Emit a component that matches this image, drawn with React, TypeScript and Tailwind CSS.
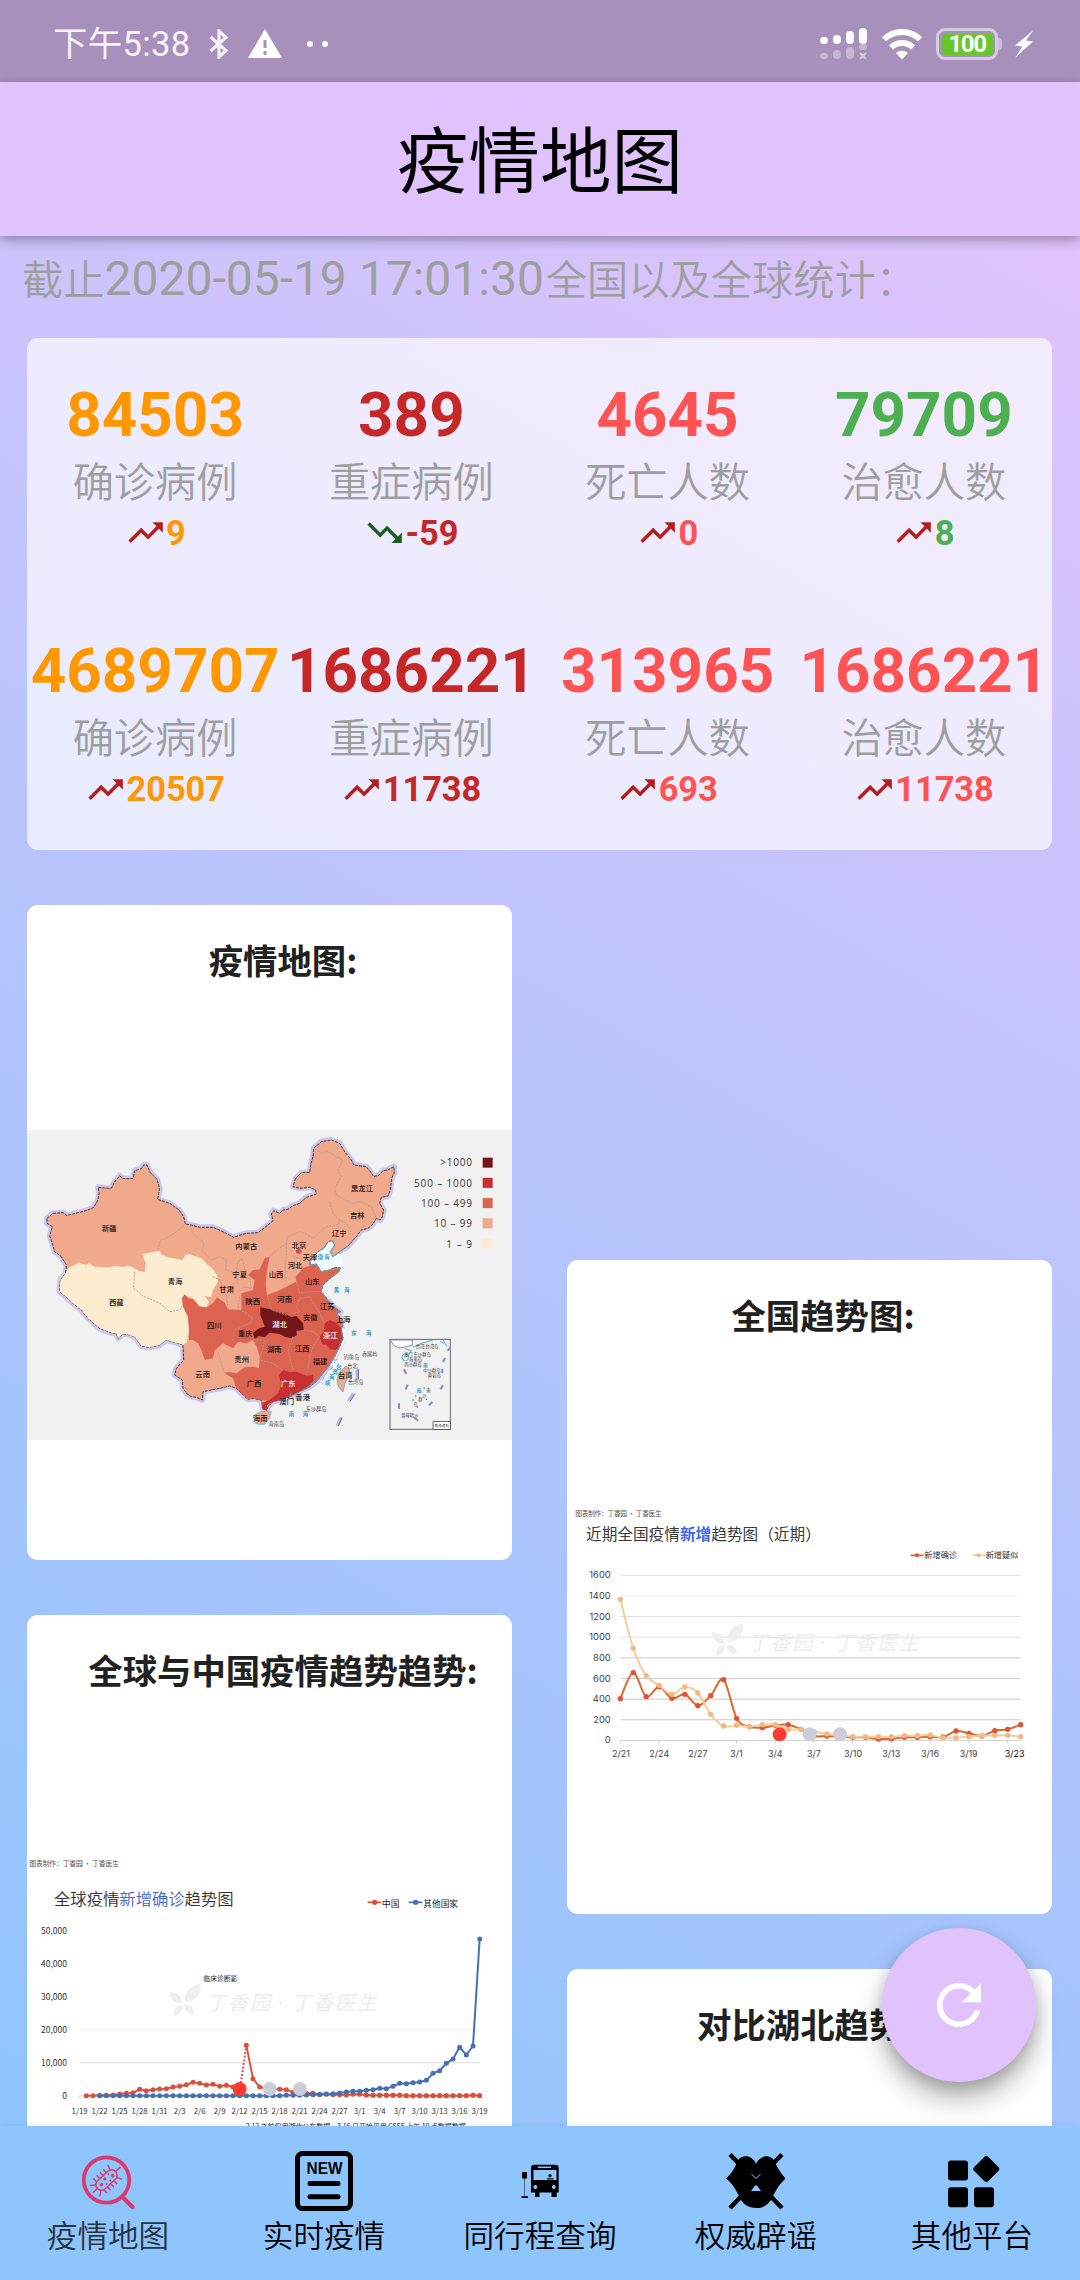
import React from "react";

const POINTS_OUTLINE =
  "82,325 100,310 130,308 142,316 155,313 180,307 205,300 222,292 235,270 238,250 236,232 255,234 275,235 284,217 300,197 308,205 325,206 340,205 345,182 365,176 372,165 382,165 392,188 412,208 420,235 414,268 450,280 478,300 492,320 497,342 515,345 540,352 580,352 610,365 642,382 665,374 680,370 715,368 745,345 760,332 755,312 762,302 780,310 790,300 805,298 820,287 840,280 860,262 890,252 888,240 870,232 840,235 820,230 828,205 845,188 870,187 874,160 880,140 882,115 905,95 935,90 960,100 975,125 995,150 1003,165 1040,170 1050,182 1062,200 1078,195 1090,182 1104,180 1123,170 1124,188 1116,205 1112,240 1105,258 1085,262 1080,280 1092,300 1088,320 1082,330 1070,325 1060,342 1045,355 1025,360 1010,380 985,408 960,425 940,440 932,425 945,405 938,392 925,395 912,415 895,425 885,435 870,450 872,465 890,462 905,485 930,480 945,472 962,474 958,485 930,505 910,525 905,545 925,570 940,590 962,605 950,612 970,630 970,645 965,660 970,685 960,710 945,740 930,765 910,790 890,815 870,830 840,845 815,858 790,868 760,875 745,890 742,900 730,895 725,870 700,865 685,868 665,850 650,835 630,828 600,835 575,840 550,845 548,870 530,862 515,860 500,850 490,835 488,810 465,795 470,775 492,750 490,705 470,698 440,690 420,705 390,712 365,708 345,680 320,672 310,672 295,685 290,670 280,670 240,655 205,625 185,600 160,580 145,565 120,545 122,510 138,490 140,465 125,440 105,425 98,400 90,378 98,350 82,340";

const POINTS_WEST =
  "145,475 178,458 200,465 208,460 225,470 250,472 270,472 288,467 310,470 330,468 345,475 358,483 375,486 378,460 368,432 405,425 420,423 425,432 445,442 490,450 497,435 510,433 530,440 545,445 560,460 580,478 592,495 595,515 580,540 575,560 555,558 568,575 560,592 540,588 520,565 495,555 487,565 490,590 505,620 508,660 502,695 492,705 470,698 440,690 420,705 390,712 365,708 345,680 320,672 310,672 295,685 290,670 280,670 240,655 205,625 185,600 160,580 145,565 120,545 122,510 138,490";

const POINTS_MIDDLE =
  "487,565 495,553 505,565 520,568 540,590 562,592 580,580 592,562 615,578 625,598 665,600 665,550 700,540 705,510 685,495 700,480 720,478 735,445 750,440 742,480 738,520 742,555 775,543 800,530 830,515 828,500 850,475 872,466 890,465 905,485 930,480 945,472 962,474 958,485 930,505 910,525 905,545 925,570 940,590 962,605 950,612 970,630 970,645 965,660 970,685 960,710 945,740 930,765 910,790 890,815 870,830 840,845 815,858 790,868 760,875 725,870 700,865 685,868 665,850 650,835 640,805 615,790 625,785 650,790 675,772 700,770 718,775 720,740 712,712 700,690 680,700 655,695 640,715 610,700 600,708 585,722 580,745 555,750 545,720 535,700 520,690 508,690 508,660 505,620 490,590";

const BORDERS = [
  "345,485 342,535 370,558 420,580 450,605 480,600 490,585",
  "415,420 422,390 440,385 470,365 497,342",
  "512,345 518,370 550,395 552,410 545,420 560,435 575,450 600,440 620,450 618,480 640,485",
  "640,520 655,520 650,490 655,455 668,445 675,480 690,500 695,535 670,530 660,545",
  "580,500 600,510 620,555 625,598 655,600 660,560",
  "750,440 765,425 775,418 800,400 805,380 840,365 860,372 880,385 890,375 920,350 955,345 960,330",
  "800,400 800,440 795,470 800,515",
  "882,115 905,130 925,125 950,140 970,150 955,180 965,200 945,235 950,255 975,270 1000,280 1020,275 1055,290 1070,325",
  "930,275 940,310 960,330 980,340 1000,375",
  "830,515 840,550 870,545 905,545",
  "742,555 755,600 800,615 840,605 830,590 840,565 870,560 900,610 915,640",
  "852,660 880,665 900,680 880,710 870,740 865,780",
  "820,680 805,720 820,780",
  "700,690 735,690 720,750 760,760 790,782",
  "640,690 645,660 690,640 700,625 665,600",
  "595,725 605,760 615,790",
  "820,440 850,445 870,450",
];

type Place = [string, number, number, string?];
const PLACES: Place[] = [
  ["新疆", 268, 356], ["内蒙古", 680, 410], ["宁夏", 660, 493], ["甘肃", 621, 538], ["青海", 466, 513],
  ["西藏", 290, 577], ["陕西", 699, 575], ["四川", 584, 647], ["重庆", 677, 671], ["贵州", 666, 749],
  ["云南", 549, 794], ["广西", 703, 820], ["海南", 722, 926], ["黑龙江", 1027, 236], ["吉林", 1013, 315],
  ["辽宁", 959, 371], ["北京", 838, 407], ["天津", 871, 442], ["河北", 826, 466], ["山西", 769, 493],
  ["山东", 878, 513], ["河南", 795, 569], ["江苏", 922, 589], ["安徽", 872, 623], ["上海", 971, 629],
  ["浙江", 932, 675, "#fff"], ["湖北", 780, 642, "#fff"], ["湖南", 764, 717], ["江西", 847, 716],
  ["福建", 901, 754], ["台湾", 977, 797], ["广东", 806, 819, "#fff"], ["香港", 849, 863], ["澳门", 801, 875],
];
const SEAS: [string, number, number][] = [
  ["渤", 902, 442], ["海", 922, 442], ["黄", 950, 541], ["海", 982, 541], ["东", 1003, 668], ["海", 1047, 668],
  ["南", 815, 912], ["海", 857, 912], ["台", 958, 772], ["湾", 946, 786], ["海", 936, 801], ["峡", 924, 818],
];
const ISLES: [string, number, number][] = [
  ["钓鱼岛", 995, 742], ["赤尾屿", 1050, 733], ["台北", 998, 769], ["台湾岛", 1008, 817], ["东沙群岛", 889, 896], ["海南岛", 770, 942],
];
const SCALE: [string, string][] = [
  [">1000", "#74151b"], ["500 – 1000", "#c72f32"], ["100 – 499", "#dd6351"], ["10 – 99", "#f1a98b"], ["1 – 9", "#fbecd0"],
];

function ChinaMap() {
  return (
    <svg viewBox="22 60 1455 930" className="block h-[310px] w-full bg-[#f1f1f1] font-['Noto_Sans_CJK_SC',sans-serif]">
      <polygon points={POINTS_OUTLINE} fill="none" stroke="#c9c8ea" strokeWidth="18" strokeLinejoin="round" />
      <path d="M925 570L905 545L912 525L960 485L1000 480L985 430L940 440L932 425L945 405L938 392L912 415L870 450V466L905 487L958 478M970 630L972 685L930 765" fill="none" stroke="#f1f1f1" strokeWidth="16" />
      <path d="M870 450L895 425L925 395L945 400L935 440L965 432L972 470L905 487Z" fill="#f3fafd" />
      <polygon points={POINTS_OUTLINE} fill="#f1a98b" stroke="#4a3038" strokeWidth="3" strokeDasharray="9 3" />
      <polygon points={POINTS_WEST} fill="#fbecd0" />
      <polygon points={POINTS_MIDDLE} fill="#dd6351" />
      <polygon points="722,592 750,597 775,605 800,612 815,622 830,618 850,640 852,660 830,662 832,675 815,685 795,680 780,672 750,668 735,682 718,678 705,687 700,668 718,655 735,650 728,630 722,615" fill="#74151b" />
      <polygon points="900,680 912,665 915,640 930,630 950,638 965,655 970,685 960,710 948,720 932,718 920,705 908,703" fill="#c72f32" />
      <polygon points="750,870 775,850 785,825 778,795 790,780 810,787 830,785 860,797 880,795 882,815 860,835 840,845 810,860 760,875 742,885 742,902 728,898 726,880" fill="#c72f32" />
      <polygon points="828,420 838,416 848,424 840,432 830,430" fill="#dd4a44" />
      <g fill="none" stroke="#b49a90" strokeWidth="2.4" strokeDasharray="7 3">
        {BORDERS.map((b) => (
          <polyline key={b} points={b} />
        ))}
      </g>
      <g fill="none" stroke="#52aed0" strokeWidth="2.4" strokeLinejoin="round">
        <path d="M985 408L960 425L940 440L932 425L945 405L938 392L925 395L912 415L895 425L870 450L872 465L890 462L905 485L930 480L962 474L958 485L910 525L905 545L925 570L962 605L950 612L970 630L965 660L970 685L945 740L930 765L890 815L840 845L815 858" />
        <path d="M700 918L722 905L755 905L748 925L735 943L710 942Z" fill="#f1a98b" />
        <path d="M980 768L990 778L985 800L976 820L970 846L956 830L952 808L960 785Z" fill="#f1a98b" />
        <path d="M726 878l5 6M815 845l-4 12 8 4M944 752l8-4M940 770l-8 10M914 800l-6 12M884 812l-8 8M904 816l4 6M956 430l14-2M968 650l8 4" />
      </g>
      <g stroke="#b9b8e0" strokeWidth="9">
        <path d="M1012 778V808M1001 850L986 873M964 922L953 947" />
        <path d="M1006 851L991 874M967 923L956 948M1016 778V808" stroke="#57506c" strokeWidth="2.5" />
      </g>
      <g textAnchor="middle" fontSize="22" fontWeight="500">
        {PLACES.map(([t, x, y, c]) => (
          <text key={t} x={x} y={y + 8} fill={c ?? "#1c1012"}>{t}</text>
        ))}
      </g>
      <g textAnchor="middle" fontSize="16" fill="#2b9fd0" fontWeight="700">
        {SEAS.map(([t, x, y]) => (
          <text key={t + x} x={x} y={y + 6}>{t}</text>
        ))}
      </g>
      <g textAnchor="middle" fontSize="15.5" fill="#444">
        {ISLES.map(([t, x, y]) => (
          <text key={t} x={x} y={y + 6}>{t}</text>
        ))}
      </g>
      <rect x="1111" y="688" width="181" height="270" fill="none" stroke="#666" strokeWidth="3" />
      <path d="M1112 690H1178V706L1150 712L1138 714L1122 706Z" fill="#fff" stroke="#8d86b8" strokeWidth="3" />
      <g fill="none" stroke="#2b9fd0" strokeWidth="2.5">
        <circle cx="1157" cy="742" r="10" />
        <path d="M1155 716L1175 722L1168 734M1180 712L1205 700L1240 690M1270 690L1282 710M1272 700L1262 695" />
      </g>
      <g stroke="#8f88c0" strokeWidth="6">
        <path d="M1152 778l8 14M1164 824l-6 14M1138 880v16M1184 924l12 8M1228 886l10-10M1262 838l8-12M1268 776v14M1270 756l6-12M1284 722l7-9" />
      </g>
      <g fontSize="13" fill="#333" textAnchor="middle">
        <text x="1222" y="713">台湾 台湾岛</text>
        <text x="1193" y="737">澳门 东沙群岛</text>
        <text x="1187" y="753">海南岛</text>
        <text x="1180" y="767">西沙群岛</text>
        <text x="1237" y="786">中沙群岛</text>
        <text x="1244" y="801">黄岩岛</text>
        <text x="1170" y="921">曾母暗沙</text>
        <text x="1226" y="845">南</text>
        <text x="1214" y="860">沙</text>
        <text x="1202" y="874">群</text>
        <text x="1188" y="887">岛</text>
      </g>
      <g fontSize="14" fill="#2b9fd0" fontWeight="700">
        <text x="1210" y="772">南</text>
        <text x="1190" y="846">海</text>
      </g>
      <path d="M1186 858h4M1202 846h4M1212 834h4M1218 868h4M1178 870h4M1192 892h3" stroke="#2b9fd0" strokeWidth="4" />
      <rect x="1240" y="935" width="52" height="23" fill="#fafafa" stroke="#333" strokeWidth="2" />
      <text x="1266" y="951" fontSize="11" fill="#444" textAnchor="middle">南海诸岛</text>
      {SCALE.map(([label, color], i) => (
        <g key={label}>
          <text x="1357" y={168.500 + i * 61} textAnchor="end" fontSize="30" fill="#3b3338" className="font-['Open_Sans','Liberation_Sans',sans-serif]" textLength={[95, 174, 153, 114, 77][i]} lengthAdjust="spacing">{label}</text>
          <rect x="1389" y={143 + i * 60.6} width="30" height="30" fill={color} />
        </g>
      ))}
    </svg>
  );
}

type Pt = [number, number];

function smooth(pts: Pt[]) {
  let d = `M${pts[0][0]} ${pts[0][1]}`;
  for (let i = 0; i < pts.length - 1; i++) {
    const p0 = pts[i - 1] ?? pts[i];
    const p1 = pts[i];
    const p2 = pts[i + 1];
    const p3 = pts[i + 2] ?? p2;
    d += `C${p1[0] + (p2[0] - p0[0]) / 6} ${p1[1] + (p2[1] - p0[1]) / 6} ${p2[0] - (p3[0] - p1[0]) / 6} ${p2[1] - (p3[1] - p1[1]) / 6} ${p2[0]} ${p2[1]}`;
  }
  return d;
}

const straight = (pts: Pt[]) => "M" + pts.map((p) => p.join(" ")).join("L");

function Dots({ pts, r, fill }: { pts: Pt[]; r: number; fill: string }) {
  return (
    <g fill={fill}>
      {pts.map(([x, y]) => (
        <circle key={x} cx={x} cy={y} r={r} />
      ))}
    </g>
  );
}

function Pager({ y }: { y: number }) {
  return (
    <g fill="#cbced6">
      <circle cx="660" cy={y} r="21" fill="#ff3b30" />
      <circle cx="750" cy={y} r="21" />
      <circle cx="841" cy={y} r="21" />
    </g>
  );
}

function Watermark({ x, y }: { x: number; y: number }) {
  return (
    <g transform={`translate(${x} ${y})`} fill="#efefef">
      <path d="M94 -50C60 -42 42 -20 48 6C76 8 96 -14 94 -50ZM0 -24C2 0 18 14 38 10C38 -12 24 -24 0 -24ZM14 48C12 26 22 14 38 14C42 30 34 42 14 48ZM76 42C74 24 64 14 46 14C44 30 56 42 76 42Z" />
      <g fontSize="60" fontStyle="italic" fontWeight="350" fill="#ececec">
        <text x="110" y="29" textLength="192">丁香园</text>
        <circle cx="334" cy="7" r="4" />
        <text x="366" y="29" textLength="256">丁香医生</text>
      </g>
    </g>
  );
}

const RED_Y = [626, 548, 620, 590, 625, 613, 647, 617, 569, 685, 710, 713, 706, 704, 718, 738, 738, 740, 742, 742, 747, 746, 742, 742, 740, 741, 723, 730, 738, 722, 718, 704];
const ORANGE_Y = [328, 475, 557, 586, 613, 591, 609, 673, 708, 706, 710, 704, 704, 718, 718, 725, 732, 736, 740, 740, 740, 740, 737, 737, 735, 743, 743, 740, 737, 736, 736, 740];

function NationalTrend() {
  const at = (y: number, i: number): Pt => [182 + i * 38.74, y];
  const red = RED_Y.map(at);
  const orange = ORANGE_Y.map(at);
  const days: [string, number][] = [["2/21", 184], ["2/24", 299], ["2/27", 415], ["3/1", 530], ["3/4", 647], ["3/7", 763], ["3/10", 880], ["3/13", 995], ["3/16", 1111], ["3/19", 1227]];
  const grid = ["#dedede", "#f2f2f2", "#dedede", "#e2e2e2", "#c9c9c9", "#cccccc", "#c9c9c9", "#c9c9c9", "#cfcfcf"];
  return (
    <svg viewBox="22 36 1455 825" className="block h-[275px] w-full bg-[#fefefe] font-['Noto_Sans_CJK_SC',sans-serif]">
      <text x="47" y="77" fontSize="20" fill="#555" textLength="259">图表制作：丁香园 · 丁香医生</text>
      <text x="79" y="149" fontSize="47" fill="#3a3a3a">
        近期全国疫情<tspan fill="#4169e8" fontWeight="700">新增</tspan>趋势图（近期）
      </text>
      <g strokeWidth="5">
        <path d="M1053 196h39" stroke="#d9642e" />
        <path d="M1239 196h39" stroke="#f5cda0" />
      </g>
      <circle cx="1072" cy="196" r="6" fill="#e2503a" />
      <circle cx="1257" cy="196" r="6" fill="#efb983" />
      <text x="1094" y="204" fontSize="24.5" fill="#333">新增确诊</text>
      <text x="1278" y="204" fontSize="24.5" fill="#333">新增疑似</text>
      {grid.map((c, i) => (
        <g key={i}>
          <path d={`M183 ${256 + i * 61.9}H1383`} stroke={c} strokeWidth="3" />
          <text x="153" y={265 + i * 61.9} fontSize="28" fill="#444" textAnchor="end" className="font-['Inter',sans-serif]">{1600 - i * 200}</text>
        </g>
      ))}
      <g stroke="#c9c9c9" strokeWidth="3">
        {red.filter((_, i) => i % 3 === 0).map(([x]) => (
          <path key={x} d={`M${x} 751v9`} />
        ))}
      </g>
      <Watermark x={456} y={450} />
      <g fontSize="27" fill="#444" textAnchor="middle" className="font-['Inter',sans-serif]">
        {days.map(([d, x]) => (
          <text key={d} x={x} y="800">{d}</text>
        ))}
        <text x="1365" y="802" fill="#111">3/23</text>
      </g>
      <path d={smooth(red)} fill="none" stroke="#d96a28" strokeWidth="6" />
      <Dots pts={red} r={8} fill="#e2503a" />
      <path d={smooth(orange)} fill="none" stroke="#f5cda0" strokeWidth="6" />
      <Dots pts={orange} r={8} fill="#efb983" />
      <Pager y={733} />
    </svg>
  );
}

const CN_Y = [767, 767, 766, 766, 765, 762, 760, 758, 748, 752, 749, 747, 746, 741, 739, 734, 727, 730, 735, 733, 739, 736, 741, 745, 616, 716, 741, 746, 747, 748, 749, 757, 759, 760, 760, 764, 763, 764, 764, 765, 763, 763, 765, 766, 766, 766, 766, 766, 767, 767, 767, 767, 767, 767, 767, 767, 767, 767, 766, 767];
const WORLD_Y = [765, 764, 763, 762, 761, 759, 756, 754, 754, 751, 749, 745, 746, 739, 730, 731, 728, 726, 721, 700, 692, 670, 657, 622, 645, 618, 297];

function GlobalTrend() {
  const cn = CN_Y.map((y, i): Pt => [200 + i * 20, y]);
  const world: Pt[] = [
    ...Array.from({ length: 31 }, (_, i): Pt => [240 + i * 20, i < 28 ? 767 : 766]),
    ...WORLD_Y.map((y, i): Pt => [860 + i * 20, y]),
  ];
  const days = ["1/19", "1/22", "1/25", "1/28", "1/31", "2/3", "2/6", "2/9", "2/12", "2/15", "2/18", "2/21", "2/24", "2/27", "3/1", "3/4", "3/7", "3/10", "3/13", "3/16", "3/19"];
  return (
    <svg viewBox="22 51 1455 825" className="block h-[275px] w-full bg-[#fefefe] font-['Noto_Sans_CJK_SC',sans-serif]">
      <text x="29" y="79" fontSize="20.5" fill="#555" textLength="269">图表制作：丁香园 · 丁香医生</text>
      <text x="103" y="194" fontSize="49" fontWeight="350" fill="#333">
        全球疫情<tspan fill="#4169c8">新增确诊</tspan>趋势图
      </text>
      <g strokeWidth="5">
        <path d="M1044 187h41" stroke="#d8513a" />
        <path d="M1167 187h41" stroke="#476fb5" />
      </g>
      <circle cx="1065" cy="187" r="8" fill="#d8513a" />
      <circle cx="1188" cy="187" r="8" fill="#476fb5" />
      <text x="1087" y="201" fontSize="26" fill="#222">中国</text>
      <text x="1211" y="201" fontSize="26" fill="#222">其他国家</text>
      <text x="551" y="423" fontSize="20.5" fill="#222">临床诊断影</text>
      <path d="M180 569H1380" stroke="#f0f0f0" strokeWidth="3" />
      <path d="M180 668H1380" stroke="#dcdcdc" strokeWidth="3" />
      <path d="M180 776V767H1380" stroke="#dcdcdc" strokeWidth="3" fill="none" />
      <g fontSize="25.5" fill="#333" textAnchor="end">
        {["50,000", "40,000", "30,000", "20,000", "10,000", "0"].map((v, i) => (
          <text key={v} x="142" y={282 + i * 99.2}>{v}</text>
        ))}
      </g>
      <g fontSize="23.5" fill="#333" textAnchor="middle">
        {days.map((d, i) => (
          <text key={d} x={180 + i * 60} y="822">{d}</text>
        ))}
      </g>
      <Watermark x={449} y={480} />
      <g fill="none" stroke="#d8513a" strokeWidth="6">
        <path d={straight(cn.slice(0, 24))} />
        <path d="M662 740L680 616" strokeDasharray="6 5" />
        <path d={straight(cn.slice(24))} />
      </g>
      <Dots pts={cn} r={7.5} fill="#d8513a" />
      <path d={straight(world)} fill="none" stroke="#476fb5" strokeWidth="6" />
      <Dots pts={world} r={7.5} fill="#476fb5" />
      <Dots pts={cn.slice(42)} r={7.5} fill="#d8513a" />
      <Pager y={747} />
      <text x="678" y="866" fontSize="21" fill="#222" textLength="660">2.12 之前仅用湖北公布数据，3.16 日开始采用 CSSE 上午 10 点数据数据</text>
    </svg>
  );
}

function Card({ title, children }: { title: string; children?: React.ReactNode }) {
  return (
    <section className="flex h-[654.5px] w-full shrink-0 flex-col overflow-hidden rounded-[11px] bg-white">
      <h2 className="h-[105px] pt-[29px] pl-[27px] text-center font-['Noto_Sans_CJK_SC',sans-serif] text-[34.4px] leading-[50px] font-bold whitespace-nowrap text-[#212121]">{title}</h2>
      <div className="flex flex-1 items-center">{children}</div>
    </section>
  );
}

interface Stat {
  value: string;
  label: string;
  delta: string;
  color: string;
  down?: boolean;
}
const STATS: Stat[] = [
  { value: "84503", label: "确诊病例", delta: "9", color: "text-[#ff9800]" },
  { value: "389", label: "重症病例", delta: "-59", color: "text-[#c62828]", down: true },
  { value: "4645", label: "死亡人数", delta: "0", color: "text-[#ff5252]" },
  { value: "79709", label: "治愈人数", delta: "8", color: "text-[#4caf50]" },
  { value: "4689707", label: "确诊病例", delta: "20507", color: "text-[#ff9800]" },
  { value: "1686221", label: "重症病例", delta: "11738", color: "text-[#c62828]" },
  { value: "313965", label: "死亡人数", delta: "693", color: "text-[#ff5252]" },
  { value: "1686221", label: "治愈人数", delta: "11738", color: "text-[#ff5252]" },
];

function StatCell({ stat }: { stat: Stat }) {
  return (
    <div className="flex h-[256.25px] flex-col items-center pt-[41px] font-['Roboto','Noto_Sans_CJK_SC',sans-serif]">
      <div className={`text-[61.9px] leading-[73px] font-bold ${stat.color}`}>{stat.value}</div>
      <div className="pt-[2px] text-[41.25px] leading-[59px] font-[350] text-[#9e9e9e]">{stat.label}</div>
      <div className="flex h-[41px] items-center">
        {stat.down ? (
          <svg viewBox="0 0 24 24" className="size-[41.25px]" fill="#1b5e20"><path d="M16 18l2.29-2.29-4.88-4.88-4 4L2 7.41 3.41 6l6 6 4-4 6.3 6.29L22 12v6z" /></svg>
        ) : (
          <svg viewBox="0 0 24 24" className="size-[41.25px]" fill="#b71c1c"><path d="M16 6l2.29 2.29-4.88 4.88-4-4L2 16.59 3.41 18l6-6 4 4 6.3-6.29L22 12V6z" /></svg>
        )}
        <span className={`text-[34.4px] leading-[41px] font-bold ${stat.color}`}>{stat.delta}</span>
      </div>
    </div>
  );
}

function StatusBar() {
  return (
    <div className="flex h-[82px] items-center bg-[#a790bb] pt-[6px] pr-[46px] pl-[53px] font-['Roboto','Noto_Sans_CJK_SC',sans-serif] text-white">
      <span className="text-[34.4px] leading-[40px] tracking-[0.4px] text-white/90">下午5:38</span>
      <svg viewBox="0 0 20 30" className="ml-[18px] h-[30px] w-[20px]" fill="none" stroke="#f4f0f7" strokeWidth="3.2"><path d="M1.5 8L17 21.5L10 28V2L17 8.500L1.500 22" /></svg>
      <svg viewBox="0 0 34 30" className="ml-[19px] h-[30px] w-[34px]"><path d="M17 0L34 29H0Z" fill="#fff" /><path d="M17 11v8M17 22v4" stroke="#a790bb" strokeWidth="3" /></svg>
      <span className="ml-[25px] size-[6px] rounded-full bg-white" />
      <span className="ml-[9px] size-[6px] rounded-full bg-white" />
      <svg viewBox="0 0 48 32" className="ml-auto h-[32px] w-[48px]">
        <g fill="#fff">
          <rect x="0" y="9" width="8" height="7" rx="3.500" /><rect x="13" y="7" width="8" height="9" rx="4" /><rect x="26" y="3" width="8" height="13" rx="4" /><rect x="39" y="0" width="8" height="16" rx="4" />
        </g>
        <g fill="#fff" opacity=".35">
          <rect x="0" y="25" width="8" height="6" rx="3" /><rect x="13" y="22" width="8" height="9" rx="4" /><rect x="26" y="19" width="8" height="12" rx="4" /><rect x="39" y="16" width="8" height="6" rx="3" />
        </g>
        <path d="M40 25l6 6M46 25l-6 6" stroke="#fff" strokeWidth="2" opacity=".5" />
      </svg>
      <svg viewBox="0 0 40 32" className="ml-[14px] h-[32px] w-[40px]" fill="none" stroke="#fff" strokeWidth="6">
        <path d="M2 11.500A25.500 25.500 0 0 1 38 11.500" /><path d="M9 19.500A16 16 0 0 1 31 19.500" />
        <path d="M20 31.500L14 25A9 9 0 0 1 26 25Z" fill="#fff" stroke="none" />
      </svg>
      <div className="ml-[14px] flex h-[32px] w-[62px] items-center justify-center rounded-[9px] border-[3px] border-[#d8cce0] p-[2.500px]">
        <div className="flex h-full w-full items-center justify-center rounded-[4px] bg-[#66c62c] text-[24px] leading-none font-bold tracking-[-1.500px]">100</div>
      </div>
      <div className="h-[12px] w-[4px] rounded-r-[4px] bg-[#cdbfd8]" />
      <svg viewBox="0 0 20 28" className="ml-[12px] h-[28px] w-[20px]" fill="#fff"><path d="M19.500 0L1 15.500L8.500 16.500L1 28L19 11.500L12 10.500Z" /></svg>
    </div>
  );
}

function VirusIcon() {
  return (
    <svg viewBox="0 0 60 60" className="size-[60px]" fill="none" stroke="#dc3a6e" strokeLinecap="round">
      <circle cx="28.500" cy="29" r="22.700" strokeWidth="3.8" />
      <path d="M44.500 46L54.500 56" strokeWidth="4.2" />
      <g transform="rotate(-43 28.500 29)" strokeWidth="1.5">
        <rect x="16" y="23.500" width="25" height="11" rx="5.500" />
        <path d="M20 23v-3.500M24.500 23v-3.500M29 23v-3.500M33.500 23v-3.500M38 24l1.500-4.500M20 35v3.500M24.500 35v3.500M29 35v3.500M33.500 35v3.500M38 34.500l2 4M42 29h5M10.500 29h5M17 25l-4-3M17 33l-4 3" />
        <g fill="#dc3a6e" stroke="none"><circle cx="21.500" cy="29" r="1.800" /><circle cx="28" cy="27" r="1.600" /><circle cx="36" cy="30" r="1.800" /><circle cx="31" cy="32" r="1" /><circle cx="26" cy="32" r=".9" /><circle cx="34" cy="26" r=".9" /></g>
      </g>
    </svg>
  );
}

function NewsIcon() {
  return (
    <svg viewBox="0 0 60 60" className="size-[60px]" fill="none" stroke="#000" strokeWidth="5">
      <rect x="3.500" y="2.500" width="53" height="55" rx="5" />
      <path d="M16 32.500H44M16 45.700H44" strokeLinecap="round" />
      <text x="30.500" y="23.200" textAnchor="middle" stroke="none" fill="#000" textLength="36" lengthAdjust="spacingAndGlyphs" className="font-['Liberation_Sans',sans-serif] text-[16px] font-bold">NEW</text>
    </svg>
  );
}

function BusIcon() {
  return (
    <svg viewBox="0 0 60 60" className="size-[60px]">
      <path d="M12 21h5v6.500h-2V45.300h3V47h-6.500v-1.700h3V27.500H12Z" />
      <path d="M24 13.700H45.500a3.200 3.200 0 0 1 3.200 3.200V41.500h-2V46H41.500V41.500H29.500V46H25V41.500H21V16.700a3 3 0 0 1 3-3Z" />
      <path d="M28 16.300h13" stroke="#8fc5fd" strokeWidth="1.500" />
      <path d="M23.500 19h23v10H23.500Z" fill="#8fc5fd" />
      <circle cx="40" cy="24.700" r="1.600" />
      <path d="M37 27.800h6.500" stroke="#000" strokeWidth="1.200" />
      <circle cx="25.300" cy="36" r="2" fill="#8fc5fd" /><circle cx="43.800" cy="36" r="2" fill="#8fc5fd" />
    </svg>
  );
}

function RumorIcon() {
  return (
    <svg viewBox="0 0 60 60" className="size-[60px]">
      <path d="M4 3.500L56 57M56 3.500L4 57" stroke="#000" strokeWidth="4.500" />
      <path d="M30 13C26 3 14 3 10.500 12C9 17 6 22 0 27.500C6 32 9 37 13 45C16 53 22 57 30.500 57C39 57 44 52 47 45C51 37 54 33 59.500 27.500C55 22 51 17 49.500 12C46 3 34 3 30 13Z" />
      <path d="M25.500 23L30 27.500L34.500 23" fill="none" stroke="#8fc5fd" strokeWidth="1" />
      <path d="M25 40L29 34.500H31L35 40Z" fill="#8fc5fd" />
    </svg>
  );
}

function AppsIcon() {
  return (
    <svg viewBox="0 0 60 60" className="size-[60px]">
      <rect x="6" y="9.500" width="20" height="20" rx="3" /><rect x="6" y="36.300" width="20" height="20" rx="3" /><rect x="32" y="36.300" width="20" height="20" rx="3" />
      <rect x="34.300" y="8" width="20" height="20" rx="3" transform="rotate(45 44.300 18)" />
    </svg>
  );
}

const TABS = [
  { label: "疫情地图", Icon: VirusIcon, tone: "text-[#24333f]" },
  { label: "实时疫情", Icon: NewsIcon, tone: "text-black" },
  { label: "同行程查询", Icon: BusIcon, tone: "text-black" },
  { label: "权威辟谣", Icon: RumorIcon, tone: "text-black" },
  { label: "其他平台", Icon: AppsIcon, tone: "text-black" },
];

export default function App() {
  return (
    <div className="relative flex h-[2280px] w-[1080px] flex-col overflow-hidden font-['Roboto','Noto_Sans_CJK_SC',sans-serif]">
      <StatusBar />
      <header className="z-10 flex h-[154px] shrink-0 items-start justify-center bg-[#e0c3fc] pt-[24px] shadow-[0_4px_11px_rgba(0,0,0,0.32)]">
        <h1 className="font-['Noto_Sans_CJK_SC',sans-serif] text-[71.5px] leading-[100px] text-black">疫情地图</h1>
      </header>
      <main className="flex h-[1890px] shrink-0 flex-col overflow-hidden bg-[linear-gradient(209.700deg,#e0c3fc,#8ec5fc)] pr-[28px] pl-[27px]">
        <p className="-ml-[5px] flex h-[101.500px] shrink-0 items-start pt-[15px] text-[41.250px] leading-[60px] font-[350] whitespace-nowrap text-[#9e9e9e]">
          截止<span className="-mt-[2px] text-[48px] leading-[60px] font-normal">2020-05-19 17:01:30</span><span className="pl-[2px]">全国以及全球统计：</span>
        </p>
        <div className="grid shrink-0 grid-cols-4 rounded-[11px] bg-white/[0.67]">
          {STATS.map((s, i) => (
            <StatCell key={i} stat={s} />
          ))}
        </div>
        <div className="flex items-start gap-[55px] pt-[55px]">
          <div className="flex w-[485px] flex-col gap-[55px]">
            <Card title="疫情地图:"><ChinaMap /></Card>
            <Card title="全球与中国疫情趋势趋势:"><GlobalTrend /></Card>
          </div>
          <div className="flex w-[485px] flex-col gap-[55px] pt-[354.500px]">
            <Card title="全国趋势图:"><NationalTrend /></Card>
            <Card title="对比湖北趋势图:" />
          </div>
        </div>
      </main>
      <nav className="z-20 grid h-[154px] shrink-0 grid-cols-5 bg-[#8fc5fd] shadow-[0_0_8px_rgba(0,0,0,0.08)]">
        {TABS.map(({ label, Icon, tone }) => (
          <div key={label} className={`flex flex-col items-center pt-[25px] ${tone}`}>
            <Icon />
            <span className="mt-[3px] text-[30.600px] leading-[46px] font-[350] whitespace-nowrap">{label}</span>
          </div>
        ))}
      </nav>
      <button className="absolute right-[44px] bottom-[198px] z-10 flex size-[154px] items-center justify-center rounded-full bg-[#e0c3fc] shadow-[0_16px_28px_rgba(0,0,0,0.3),0_6px_14px_rgba(0,0,0,0.14)]">
        <svg viewBox="0 0 24 24" className="size-[66px]" fill="#fff"><path d="M17.650 6.350C16.200 4.900 14.210 4 12 4c-4.420 0-7.990 3.580-7.990 8s3.570 8 7.990 8c3.730 0 6.840-2.550 7.730-6h-2.080c-.82 2.330-3.040 4-5.650 4-3.310 0-6-2.690-6-6s2.690-6 6-6c1.660 0 3.140.69 4.220 1.780L13 11h7V4l-2.350 2.350z" /></svg>
      </button>
    </div>
  );
}
